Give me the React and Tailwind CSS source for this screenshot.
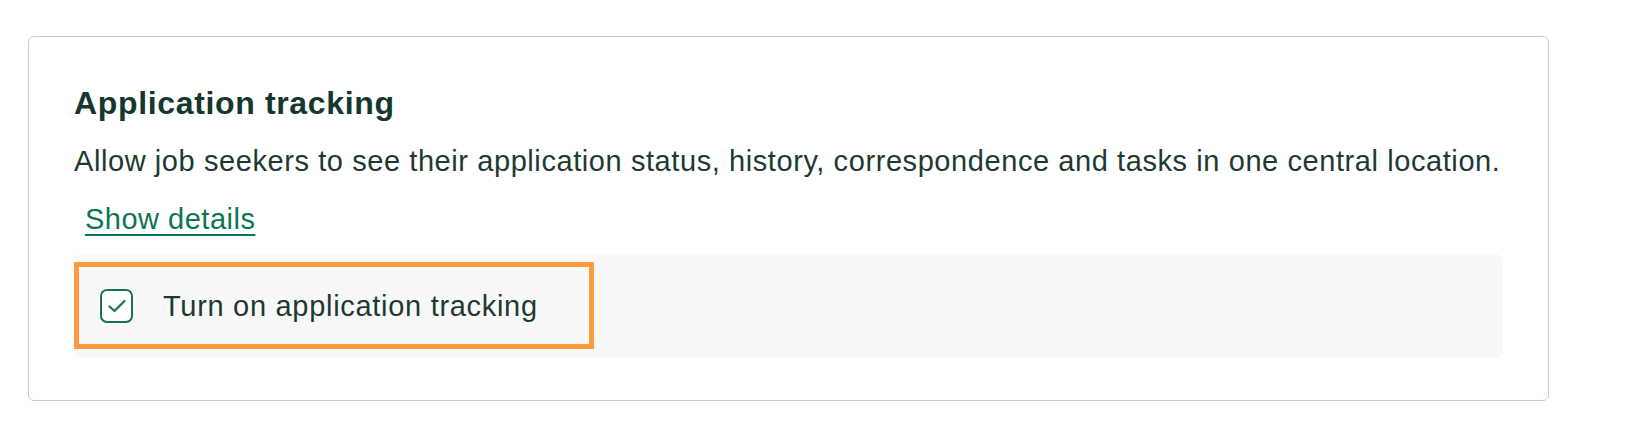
import React from "react";

export default function App() {
  return (
    <div className="min-h-[440px] w-[1636px] bg-white pt-[36px] pl-[28px]" style={{ fontFamily: '"Liberation Sans", Arial, sans-serif' }}>
      <div className="w-[1521px] rounded-[6px] border-[1.5px] border-[#c8cecb] bg-white pl-[45px] pr-[45px] pt-[46px] pb-[42px]">
        <h2 className="text-[32px] font-bold leading-[40px] tracking-[0.65px] text-[#15372c]">Application tracking</h2>
        <p className="mt-[18px] text-[29px] leading-[40px] tracking-[0.58px] text-[#1e3a30]">
          Allow job seekers to see their application status, history, correspondence and tasks in one central location.
        </p>
        <div className="mt-[18px] pl-[11px]">
          <a href="#" className="text-[29px] leading-[40px] tracking-[0.5px] text-[#0b7556] underline decoration-[2px] underline-offset-[5px]">
            Show details
          </a>
        </div>
        <div className="mt-[15px] h-[104px] w-full rounded-[8px] bg-[#f8f8f8] pt-[8px]">
          <div className="flex h-[87px] w-[520px] items-center border-[5px] border-[#fe9a3b] pl-[21px]">
            <span className="flex h-[34px] w-[33px] items-center justify-center rounded-[7px] border-2 border-[#1a7356] bg-white">
              <svg width="24" height="24" viewBox="0 0 24 24" fill="none">
                <path d="M4.5 12.5 L9.5 17 L19.5 7" stroke="#1a7356" strokeWidth="2.2" strokeLinecap="round" strokeLinejoin="round" />
              </svg>
            </span>
            <span className="ml-[30px] text-[29px] leading-[40px] tracking-[0.7px] text-[#1e3a30]">Turn on application tracking</span>
          </div>
        </div>
      </div>
    </div>
  );
}
